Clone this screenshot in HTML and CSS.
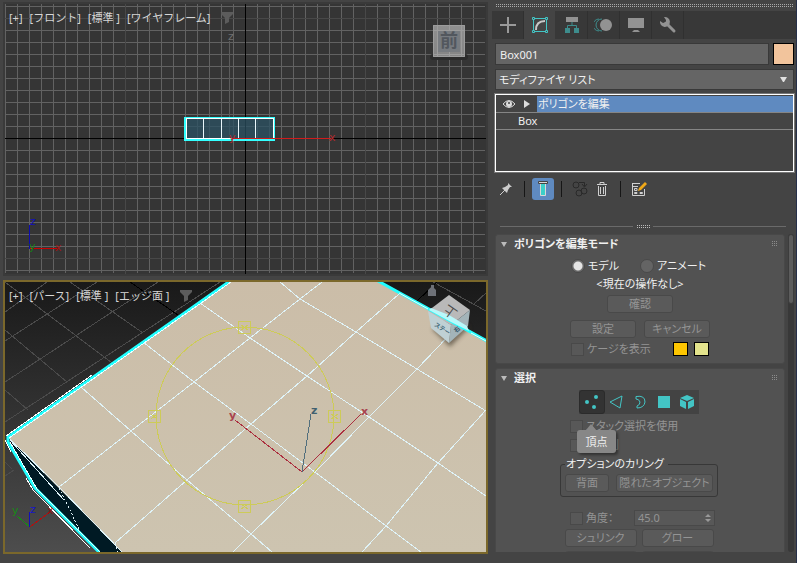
FILE: index.html
```html
<!DOCTYPE html>
<html lang="ja">
<head>
  <meta charset="UTF-8" />
  <meta name="viewport" content="width=device-width, initial-scale=1" />
  <title>Box001</title>
  <link rel="stylesheet" href="styles.css">
</head>
<body>
  <main class="viewports">
    <!-- Front view -->
    <section class="viewport" aria-label="フロント">
      <svg class="scene" viewBox="5 4 481 270" preserveAspectRatio="xMidYMid slice">
        <defs>
          <pattern id="grid" x="5" y="6" width="12" height="12" patternUnits="userSpaceOnUse">
            <path d="M0 .5H12M.5 0V12" stroke="#626262" />
          </pattern>
          <linearGradient id="cubeFront" x1="0" y1="0" x2="0" y2="1">
            <stop offset="0" stop-color="#8f8f8f" />
            <stop offset="1" stop-color="#858585" />
          </linearGradient>
        </defs>
        <rect x="5" y="4" width="481" height="270" fill="#353535" />
        <rect x="5" y="4" width="480" height="269" fill="url(#grid)" />
        <path d="M125.500 4V274M365.500 4V274M5 18.500H485M5 258.500H485" stroke="#484848" />
        <path d="M245.500 4V274M5 138.500H486" stroke="#000" />
        <path d="M229.500 41V138" stroke="#5c5c5c" />
        <rect x="186" y="118" width="88" height="21" fill="#2b5163" fill-opacity=".75" />
        <path d="M203.500 118V139M221.500 118V139M238.500 118V139M255.500 118V139" stroke="#e8f6fa" />
        <rect x="185" y="118" width="89" height="22" fill="none" stroke="#3ff" stroke-width="2" />
        <rect x="186.500" y="118.500" width="87" height="20" fill="none" stroke="#fff" />
        <path d="M232 138.500H331" stroke="#d01c1c" />
        <g class="axis">
          <text x="228" y="40" fill="#707070">z</text>
          <text x="229" y="141" fill="#b02a2e">y</text>
          <text x="329" y="141" fill="#b02a2e">x</text>
        </g>
        <rect x="430" y="54" width="38" height="6" rx="3" fill="#2b2b2b" />
        <rect x="433" y="25" width="32" height="32" fill="url(#cubeFront)" />
        <path d="M433.500 25.500H464.500V56.500H433.500ZM437.500 25V57M461.500 25V57M449.500 25V57M433 30.500H465M433 54.500H465" fill="none" stroke="#9c9c9c" />
        <rect x="438" y="31" width="22" height="21" fill="#777b80" />
        <text class="cube-text" x="449" y="47" fill="#52575e">前</text>
        <path d="M29.500 225V249" stroke="#0c0cb0" />
        <path d="M30 248.500H57" stroke="#c00" />
        <g class="axis">
          <text x="30" y="225" fill="#1010b8">z</text>
          <text x="29" y="250" fill="#178017">y</text>
          <text x="55" y="251" fill="#a01212">x</text>
        </g>
      </svg>
      <nav class="labels">
        <button>[+]</button>
        <button>[フロント]</button>
        <button>[標準 ]</button>
        <button>[ワイヤフレーム]</button>
        <button class="filter" aria-label="フィルタ"><svg width="12" height="12"><path d="M0 0H12V2L8 6V10L4 12V6L0 2Z" fill="#5c5c5c" /></svg></button>
      </nav>
    </section>

    <!-- Perspective view -->
    <section class="viewport active" aria-label="パース">
      <svg class="scene" viewBox="5 282 481 270" preserveAspectRatio="xMidYMid slice">
        <defs>
          <linearGradient id="sky" x1="0" y1="0" x2="0" y2="1">
            <stop offset="0" stop-color="#191919" />
            <stop offset="1" stop-color="#4d4d4d" />
          </linearGradient>
          <linearGradient id="top" x1="0" y1="0" x2="0" y2="1">
            <stop offset="0" stop-color="#cbbda8" />
            <stop offset="1" stop-color="#cdc4b0" />
          </linearGradient>
          <filter id="soft" x="-50%" y="-50%" width="200%" height="200%"><feGaussianBlur stdDeviation="2" /></filter>
        </defs>
        <rect x="5" y="282" width="481" height="270" fill="url(#sky)" />
        <g fill="none" stroke="#4b4b4b" shape-rendering="crispEdges">
          <path d="M70 282L143 333M5 282L112 363M5 330L67 382M5 390L28 410M5 462L12 469" />
          <path d="M47 282L5 312M97 282L5 341M158 282L5 382M220 282L5 422M5 476L14 470" />
          <path d="M433 282L486 311M473 305L487 292" />
          <path d="M130 282L178 315M417 301L437 282" stroke="#000" />
        </g>
        <path d="M8 437L230 281H378L487 341V553H123Z" fill="url(#top)" />
        <path d="M8 437L123 553H99L35 488Z" fill="#001a24" />
        <!-- Polygon edges on the top face -->
        <g fill="none" stroke="#dff3f8" shape-rendering="crispEdges">
          <path d="M280 282L300 299L356 332L417 369L486 411" />
          <path d="M200 303L250 338L307 376L369 417L438 463L486 496" />
          <path d="M143 342L194 382L251 424L315 472L386 526L421 552" />
          <path d="M81 387L131 431L187 480L251 534L272 552" />
          <path d="M59 487L131 431L194 382L250 338L300 299L322 282" />
          <path d="M115 543L187 480L251 424L307 376L356 332L399 294" />
          <path d="M233 552L251 534L315 472L369 417L417 369L456 328" />
          <path d="M362 552L386 526L438 463L486 410" />
          <path d="M8 437L59 487L123 553M10 440L64 500" />
          <path d="M59 488L70 510L82 536M115 543L118 552" stroke-dasharray="2 2" />
        </g>
        <path d="M230 281L8 437V442L35 488L99 552" fill="none" stroke="#2ff" stroke-width="3" />
        <path d="M231 282L9 438M10 442L37 489L101 553" fill="none" stroke="#e8ffff" shape-rendering="crispEdges" />
        <path d="M6 436L92 375M5 440L11 452M26 478L33 490L90 548" fill="none" stroke="#fff" shape-rendering="crispEdges" />
        <!-- View cube -->
        <path d="M432 329L450 347L470 327L455 316Z" fill="#40372c" opacity=".6" filter="url(#soft)" />
        <path d="M449 295L470 310L451 325L428 311Z" fill="#b9b9b9" />
        <path d="M428 311L451 325L449 343L431 328Z" fill="#bfd0d4" />
        <path d="M470 310L451 325L449 343L468 326Z" fill="#a3b4b9" />
        <path d="M378 281L487 341" stroke="#2ff" stroke-width="3" />
        <path d="M429 310L451 322L469 331L467 326L449 315L431 308Z" fill="#b8f8fa" />
        <path d="M399 293L428 309M471 333L486 341" stroke="#e8ffff" />
        <text class="cube-top" transform="translate(451 311) rotate(-145)" fill="#4a4a4a">上</text>
        <text class="cube-side" transform="translate(434 326) rotate(32)" fill="#446878">ステー</text>
        <text class="cube-side" transform="translate(456 333) rotate(-40)" fill="#34566c">右</text>
        <path d="M428 290L432 286L436 290V296H428ZM431 285H434V288H431Z" fill="#6e7178" />
        <!-- Rotate ring -->
        <g fill="none" stroke="#cdcb58" shape-rendering="crispEdges">
          <circle cx="245" cy="416" r="89" />
          <path d="M238.500 321.500H250.500V333.500H238.500ZM238.500 500.500H250.500V512.500H238.500ZM148.500 410.500H160.500V422.500H148.500ZM328.500 410.500H340.500V422.500H328.500Z" />
          <path d="M241 325L248 330M248 325L241 330M241 504L248 509M248 504L241 509M151 414L157 419M157 414L151 419M331 414L338 419M338 414L331 419" />
        </g>
        <g fill="none" shape-rendering="crispEdges">
          <path d="M235 420L302 472L361 414" stroke="#ac3040" />
          <path d="M302 472L311 414" stroke="#526f7d" />
          <path d="M30 527L50 512" stroke="#b01010" />
          <path d="M30 527L17 516" stroke="#178a17" />
          <path d="M29.500 527V512" stroke="#1010b8" />
        </g>
        <g class="axis">
          <text class="bold" x="229" y="419" fill="#a8434e">y</text>
          <text class="bold" x="361" y="415" fill="#a8434e">x</text>
          <text class="bold" x="311" y="414" fill="#41606f">z</text>
          <text x="12" y="514" fill="#178a17">y</text>
          <text x="30" y="513" fill="#1515c8">z</text>
          <text x="47" y="514" fill="#8c1414">x</text>
        </g>
      </svg>
      <nav class="labels">
        <button>[+]</button>
        <button>[パース]</button>
        <button>[標準 ]</button>
        <button>[エッジ面 ]</button>
        <button class="filter" aria-label="フィルタ"><svg width="12" height="12"><path d="M0 0H12V2L8 6V10L4 12V6L0 2Z" fill="#5c5c5c" /></svg></button>
      </nav>
    </section>
  </main>

  <aside class="panel">
    <div class="grip"></div>
    <nav class="tabs">
      <button class="tab" aria-label="作成"><svg width="20" height="20"><path d="M10 2V18M2 10H18" stroke="#9a9a9a" stroke-width="2" /></svg></button>
      <button class="tab selected" aria-label="修正"><svg width="20" height="20" fill="none" stroke="#43c5c5"><path d="M3.500 5V15M16.500 5V15M5 3.500H15M5 16.500H15" /><path d="M2.500 2.500H4.500V4.500H2.500ZM15.500 2.500H17.500V4.500H15.500ZM2.500 15.500H4.500V17.500H2.500ZM15.500 15.500H17.500V17.500H15.500Z" /><path d="M6 15Q6 6 15 6" stroke="#c8c8c8" stroke-width="2" /></svg></button>
      <button class="tab" aria-label="階層"><svg width="20" height="20"><path d="M4 2H16V7H4Z" fill="#929292" /><path d="M10 7V10M5.500 14V10.500H14.500V14" fill="none" stroke="#3d8c8c" /><path d="M3 13H8V18H3ZM12 13H17V18H12Z" fill="#3d8c8c" /></svg></button>
      <button class="tab" aria-label="モーション"><svg width="20" height="20"><path d="M8 4A6 6 0 0 0 8 16M5 4A6 6 0 0 0 5 16" fill="none" stroke="#3d8c8c" /><circle cx="12" cy="10" r="6" fill="#929292" /></svg></button>
      <button class="tab" aria-label="表示"><svg width="20" height="20"><path d="M2 3H18V13H2ZM8 15H12L14 17H6Z" fill="#929292" /></svg></button>
      <button class="tab" aria-label="ユーティリティ"><svg width="20" height="20"><path d="M8 8L16 16" stroke="#929292" stroke-width="3" stroke-linecap="round" /><path d="M6 2A5 5 0 1 1 2 6L5 8L8 7L8 5Z" fill="#929292" /></svg></button>
    </nav>

    <div class="name-row">
      <input class="name" type="text" value="Box001" aria-label="オブジェクト名" />
      <button class="color object-color" aria-label="オブジェクト カラー"></button>
    </div>
    <div class="modifier">
      <select aria-label="モディファイヤ リスト"><option>モディファイヤ リスト</option></select>
      <svg class="caret" width="7" height="5"><path d="M0 0H7L4 5H3Z" fill="#e0e0e0" /></svg>
    </div>

    <ul class="stack">
      <li class="current">
        <svg width="14" height="10"><path d="M1 5Q7 -2 13 5Q7 12 1 5Z" fill="none" stroke="#ddd" /><circle cx="7" cy="5" r="3" fill="#ddd" /><circle cx="7" cy="4" r="1" fill="#444" /></svg>
        <svg width="7" height="8"><path d="M1 0L7 4L1 8Z" fill="#ddd" /></svg>
        <span>ポリゴンを編集</span>
      </li>
      <li class="base">Box</li>
    </ul>

    <div class="toolbar">
      <button class="tool" aria-label="スタックを固定"><svg width="14" height="14"><path d="M1 13L6 8" stroke="#ccc" /><path d="M3 6L6 5L9 3L9 1L13 5L11 5L9 8L8 11Z" fill="#ccc" /></svg></button>
      <i class="divider"></i>
      <button class="tool on" aria-label="最終結果を表示"><svg width="12" height="18"><path d="M3.500 3V15.500H8.500V3" fill="#3ccfc8" stroke="#d8d8d8" /><path d="M1.500 1.500H10.500V3.500H1.500Z" fill="#d8d8d8" stroke="#444" /></svg></button>
      <i class="divider"></i>
      <button class="tool" aria-label="固有にする" disabled><svg width="18" height="18" fill="none" stroke="#292929"><circle cx="5" cy="5" r="3" /><circle cx="8" cy="13" r="3" /><circle cx="13" cy="11" r="3" /><path d="M8 2.500H13.500V6M11 4L13.500 7L16 4" /></svg></button>
      <button class="tool" aria-label="モディファイヤを除去"><svg width="12" height="16" fill="none" stroke="#d0d0d0"><path d="M1 3.500H11M4 3V1.500H8V3M2.500 5V14.500H9.500V5M4.500 6V13M7.500 6V13" /></svg></button>
      <i class="divider"></i>
      <button class="tool" aria-label="モディファイヤ セットを設定"><svg width="16" height="16"><path d="M1 2.500H9M1.500 2V14.500H13.500V8M1 5.500H7" fill="none" stroke="#d0d0d0" /><path d="M3.500 7.500H6V9.500H3.500ZM3.500 11.500H6V12.500H3.500ZM9 11.500H11.500V12.500H9Z" fill="none" stroke="#d0d0d0" /><path d="M7 10L8 7L14 1L16 3L10 9Z" fill="#f0a818" /></svg></button>
    </div>

    <div class="splitter"><i></i><b></b><i></i></div>

    <div class="scroller">
      <div class="rollouts">
        <section class="rollout">
          <button class="rollout-title"><svg width="6" height="5"><path d="M0 0H6L3 5Z" fill="#bbb" /></svg><span>ポリゴンを編集モード</span><i class="dots"></i></button>
          <div class="mode-body">
            <div class="radios">
              <label><input type="radio" name="mode" checked />モデル</label>
              <label><input type="radio" name="mode" />アニメート</label>
            </div>
            <p class="operation">&lt;現在の操作なし&gt;</p>
            <button class="btn confirm" disabled>確認</button>
            <div class="pair">
              <button class="btn" disabled>設定</button>
              <button class="btn" disabled>キャンセル</button>
            </div>
            <div class="cage">
              <label class="check"><input type="checkbox" disabled />ケージを表示</label>
              <button class="color cage-color" aria-label="ケージ カラー"></button>
              <button class="color cage-selected" aria-label="選択ケージ カラー"></button>
            </div>
          </div>
        </section>

        <section class="rollout">
          <button class="rollout-title"><svg width="6" height="5"><path d="M0 0H6L3 5Z" fill="#bbb" /></svg><span>選択</span><i class="dots"></i></button>
          <div class="select-body">
            <div class="levels">
              <button class="level chosen" aria-label="頂点"><svg width="16" height="16" fill="#43c5c5"><circle cx="3" cy="8" r="2" /><circle cx="12" cy="3" r="2" /><circle cx="10" cy="13" r="2" /></svg>
                <span class="tooltip" role="tooltip">頂点</span></button>
              <button class="level" aria-label="エッジ"><svg width="16" height="16"><path d="M2 8L14 2L12 14Z" fill="none" stroke="#43c5c5" /></svg></button>
              <button class="level" aria-label="境界"><svg width="16" height="16"><path d="M4 2.500Q13 1 13 8Q12 14 5 14V12Q8 11 8 8Q7 5 4 5Z" fill="none" stroke="#43c5c5" /></svg></button>
              <button class="level" aria-label="ポリゴン"><svg width="16" height="16"><path d="M2 2H14V14H2Z" fill="#43c5c5" /></svg></button>
              <button class="level" aria-label="要素"><svg width="16" height="16" fill="#43c5c5"><path d="M8 1L15 4L8 7L1 4ZM1 5L7 8V15L1 12ZM15 5L9 8V15L15 12Z" /></svg></button>
            </div>
            <label class="check"><input type="checkbox" disabled />スタック選択を使用</label>
            <label class="check"><input type="checkbox" disabled />頂点別</label>
            <fieldset>
              <legend>オプションのカリング</legend>
              <button class="btn back" disabled>背面</button>
              <button class="btn hidden-objects" disabled>隠れたオブジェクト</button>
            </fieldset>
            <div class="angle">
              <label class="check"><input type="checkbox" disabled />角度：</label>
              <div class="spinner">
                <input type="text" value="45.0" aria-label="角度" disabled />
                <svg width="6" height="8"><path d="M0 3L3 0L6 3ZM0 5L3 8L6 5Z" fill="#999" /></svg>
              </div>
            </div>
            <div class="pair wide">
              <button class="btn" disabled>シュリンク</button>
              <button class="btn" disabled>グロー</button>
            </div>
            <div class="pair wide">
              <button class="btn" aria-label="リング" disabled></button>
              <button class="btn" aria-label="ループ" disabled></button>
            </div>
          </div>
        </section>
      </div>
      <div class="scrollbar"><i></i></div>
    </div>
  </aside>
</body>
</html>
```

FILE: styles.css
```css
* {
  box-sizing: border-box;
}
body {
  margin: 0;
  height: 100vh;
  display: grid;
  grid-template-columns: minmax(0, 1fr) 309px;
  background: #444;
  color: #f0f0f0;
  font-family: "Noto Sans", "Noto Sans CJK JP", sans-serif;
  font-size: 11px;
  line-height: 14px;
  font-feature-settings: "palt";
  overflow: hidden;
}
button, input, select {
  margin: 0;
  padding: 0;
  border: 0;
  background: none;
  color: inherit;
  font: inherit;
  font-feature-settings: inherit;
}
svg {
  display: block;
  flex: none;
}

/* Viewports */
.viewports {
  display: grid;
  grid-template-rows: 1fr 1fr;
  gap: 4px;
  padding: 2px 0 9px 3px;
  min-height: 0;
}
.viewport {
  position: relative;
  min-height: 0;
  border: 2px solid #3a3a3a;
  overflow: hidden;
}
.viewport.active {
  border-color: #7b682b;
}
.scene {
  width: 100%;
  height: 100%;
}
.labels {
  position: absolute;
  top: 7px;
  left: 4px;
  display: flex;
  gap: 7px;
  color: #d6d6d6;
  font-feature-settings: normal;
}
.filter {
  margin-left: 4px;
}
.axis {
  font: 11px "DejaVu Sans", sans-serif;
}
.axis .bold {
  font-weight: bold;
}
.cube-text {
  font-size: 18px;
  font-weight: bold;
  text-anchor: middle;
}
.cube-top {
  font-size: 13px;
  text-anchor: middle;
  dominant-baseline: middle;
}
.cube-side {
  font-size: 6px;
  font-weight: bold;
}

/* Command panel */
.panel {
  display: flex;
  flex-direction: column;
  min-height: 0;
  padding: 4px 2px 11px 7px;
  border-right: 1px solid #26304a;
}
.grip {
  height: 3px;
  flex: none;
  background: conic-gradient(#aaa 25%, transparent 0) 0 0 / 2px 2px;
}
.tabs {
  display: flex;
  flex: none;
  height: 28px;
  margin: 4px -2px 4px -3px;
  background: #383838;
}
.tab {
  width: 32px;
  display: flex;
  align-items: center;
  justify-content: center;
  border-right: 1px solid #303030;
}
.tab.selected {
  background: #444;
  border-color: #383838;
}
.name-row {
  display: flex;
  gap: 4px;
}
.name {
  flex: 1;
  min-width: 0;
  height: 22px;
  padding: 0 4px;
  border: 1px solid #393939;
  background: #656565;
}
.color {
  border: 1px solid #000;
}
.object-color {
  width: 21px;
  height: 22px;
  background: #f2c49c;
}
.modifier {
  position: relative;
  margin-top: 4px;
}
.modifier select {
  display: block;
  width: 100%;
  height: 21px;
  padding: 0 3px;
  border: 1px solid #393939;
  background: #656565;
  appearance: none;
}
.caret {
  position: absolute;
  right: 7px;
  top: 8px;
}
.stack {
  flex: none;
  height: 78px;
  margin: 4px 0 0;
  padding: 1px 0 0;
  border: 1px solid #fff;
  outline: 1px solid #777;
  list-style: none;
}
.stack li {
  height: 17px;
  display: flex;
  align-items: center;
  border-bottom: 1px solid #858585;
}
.current {
  gap: 7px;
  padding-left: 6px;
}
.current span {
  flex: 1;
  line-height: 16px;
  padding-left: 1px;
  background: #5f8ac0;
}
.base {
  padding-left: 22px;
}
.toolbar {
  display: flex;
  flex: none;
  align-items: center;
  height: 22px;
  margin: 6px 0 0;
}
.tool {
  width: 22px;
  height: 22px;
  display: flex;
  align-items: center;
  justify-content: center;
  border-radius: 3px;
}
.tool.on {
  background: #5f8ac0;
}
.divider {
  width: 1px;
  height: 16px;
  margin: 0 7px;
  background: #161616;
}
.splitter {
  display: flex;
  align-items: center;
  gap: 3px;
  flex: none;
  height: 5px;
  margin: 24px 8px 5px 5px;
}
.splitter i {
  flex: 1;
  height: 1px;
  background: #6a6a6a;
}
.splitter b {
  width: 14px;
  height: 4px;
  background: conic-gradient(#bbb 25%, transparent 0) 0 0 / 2px 2px;
}

/* Rollouts */
.scroller {
  flex: 1;
  min-height: 0;
  display: flex;
  gap: 3px;
}
.rollouts {
  flex: 1;
  overflow: hidden;
}
.rollout {
  margin-bottom: 4px;
  border: 1px solid #484848;
  border-radius: 3px;
  background: #525252;
}
.rollout-title {
  width: 100%;
  height: 18px;
  display: flex;
  align-items: center;
  padding: 0 7px 0 5px;
  font-weight: bold;
  text-align: left;
}
.rollout-title span {
  flex: 1;
  padding-left: 7px;
}
.dots {
  width: 6px;
  height: 6px;
  background: conic-gradient(#8c8c8c 25%, transparent 0) 0 0 / 2px 2px;
}
.mode-body {
  display: flex;
  flex-direction: column;
  align-items: center;
  padding: 4px 0 7px;
}
.radios {
  display: flex;
  width: 138px;
  height: 18px;
}
.radios label {
  flex: 1;
  display: flex;
  align-items: center;
  gap: 3px;
  white-space: nowrap;
}
input[type="radio"] {
  width: 14px;
  height: 14px;
  flex: none;
  appearance: none;
  border: 1px solid #494949;
  border-radius: 50%;
  background: #646464;
}
input[type="radio"]:checked {
  background: radial-gradient(#e4e4e4 4px, #6c6c6c 5px);
}
.operation {
  margin: 2px 0 4px;
}
.btn {
  width: 66px;
  height: 18px;
  border: 1px solid #494949;
  border-radius: 3px;
  background: #5a5a5a;
  color: #949494;
  line-height: 14px;
  white-space: nowrap;
}
.pair {
  display: flex;
  justify-content: space-between;
  width: 140px;
  margin-top: 7px;
}
.cage {
  display: flex;
  align-items: center;
  gap: 6px;
  width: 138px;
  margin-top: 4px;
}
.cage .check {
  flex: 1;
}
.cage .color {
  width: 15px;
  height: 14px;
}
.cage-color {
  background: #fec601;
}
.cage-selected {
  background: #e3e38c;
}
.check {
  display: flex;
  align-items: center;
  gap: 3px;
  height: 14px;
  color: #949494;
  white-space: nowrap;
}
input[type="checkbox"] {
  width: 13px;
  height: 13px;
  flex: none;
  appearance: none;
  border: 1px solid #494949;
  background: #585858;
}
.select-body {
  width: 160px;
  margin: 0 auto;
  padding: 3px 2px 0 0;
}
.select-body .check {
  margin: 0 0 5px 10px;
}
.levels {
  display: flex;
  width: 120px;
  height: 24px;
  margin: 0 auto 5px;
  background: #434343;
}
.level {
  position: relative;
  flex: 1;
  display: flex;
  align-items: center;
  justify-content: center;
}
.level.chosen {
  border: 1px solid #2b2b2b;
  border-radius: 3px;
  background: #333;
}
.tooltip {
  position: absolute;
  z-index: 1;
  left: -3px;
  top: 39px;
  width: 39px;
  line-height: 23px;
  border-radius: 3px;
  background: #878787;
  box-shadow: 2px 2px 3px rgba(0, 0, 0, 0.4);
}
.tooltip::before {
  content: "";
  position: absolute;
  left: 9px;
  top: -6px;
  border: 5px solid transparent;
  border-top: 0;
  border-bottom: 6px solid #878787;
}
fieldset {
  display: flex;
  justify-content: space-between;
  min-width: 0;
  margin: 0;
  padding: 3px 4px 4px;
  border: 1px solid #383838;
  border-radius: 3px;
}
legend {
  padding: 0 4px 0 1px;
}
.back {
  width: 44px;
}
.hidden-objects {
  width: 97px;
}
.angle {
  display: flex;
  align-items: center;
  justify-content: space-between;
  margin: 13px 3px 3px 0;
}
.select-body .angle .check {
  margin-bottom: 0;
}
.spinner {
  display: flex;
  align-items: center;
  width: 81px;
  height: 16px;
  padding: 0 3px;
  border: 1px solid #494949;
  background: #585858;
  color: #949494;
}
.spinner input {
  flex: 1;
  min-width: 0;
}
.pair.wide {
  width: 149px;
  margin: 0 auto 4px;
}
.wide .btn {
  width: 72px;
}
.scrollbar {
  width: 6px;
  border-radius: 3px;
  background: #383838;
}
.scrollbar i {
  display: block;
  height: 22%;
  border: 1px solid #3c3c3c;
  border-radius: 3px;
  background: #5c5c5c;
}
```
